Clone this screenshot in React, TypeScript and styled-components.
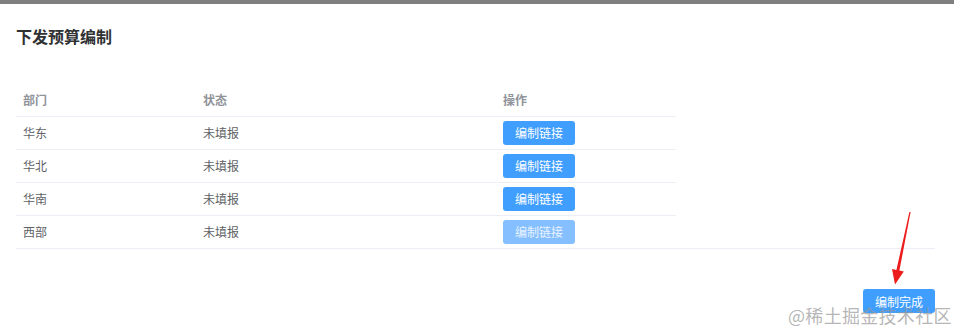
import React from "react";
import styled, { createGlobalStyle } from "styled-components";

const Global = createGlobalStyle`
  html, body { margin: 0; padding: 0; background: #fff; }
  body { font-family: "Noto Sans CJK SC", "Liberation Sans", sans-serif; }
`;

const Page = styled.div`
  position: relative;
  width: 954px;
  height: 330px;
  overflow: hidden;
  background: #fff;
`;

const TopBar = styled.div`
  height: 4px;
  background: #7f7f7f;
`;

const Content = styled.div`
  padding: 22px 19px 0 16px;
`;

const Title = styled.h2`
  margin: 0;
  font-size: 16px;
  line-height: 20px;
  font-weight: 700;
  color: #303133;
`;

const TableWrap = styled.div`
  margin-top: 37px;
  border-bottom: 1px solid #ebeef5;
`;

const Table = styled.table`
  border-collapse: collapse;
  table-layout: fixed;
  width: 660px;
  font-size: 12px;
`;

const Th = styled.th<{ $w: number }>`
  width: ${(p) => p.$w}px;
  height: 33px;
  padding: 0 0 0 7px;
  text-align: left;
  font-weight: 700;
  color: #909399;
  border-bottom: 1px solid #ebeef5;
  box-sizing: border-box;
`;

const Td = styled.td<{ $last?: boolean }>`
  height: 33px;
  padding: 0 0 0 7px;
  color: #606266;
  border-bottom: ${(p) => (p.$last ? "none" : "1px solid #ebeef5")};
  box-sizing: border-box;
  vertical-align: middle;
`;

const Btn = styled.button<{ $disabled?: boolean }>`
  display: inline-flex;
  align-items: center;
  justify-content: center;
  width: 72px;
  height: 24px;
  padding: 0;
  border: none;
  border-radius: 3px;
  background: ${(p) => (p.$disabled ? "#85bfff" : "#409eff")};
  color: ${(p) => (p.$disabled ? "#e8f3ff" : "#fff")};
  font-family: inherit;
  font-size: 12px;
  cursor: ${(p) => (p.$disabled ? "not-allowed" : "pointer")};
`;

const Footer = styled.div`
  display: flex;
  justify-content: flex-end;
  margin-top: 40px;
`;

const Watermark = styled.div`
  position: absolute;
  left: 788px;
  top: 303px;
  font-size: 18px;
  line-height: 24px;
  color: rgba(150, 150, 150, 0.7);
  white-space: nowrap;
  letter-spacing: 0.3px;
  pointer-events: none;
`;

const Overlay = styled.svg`
  position: absolute;
  left: 0;
  top: 0;
  pointer-events: none;
`;

const rows = [
  { dept: "华东", status: "未填报", disabled: false },
  { dept: "华北", status: "未填报", disabled: false },
  { dept: "华南", status: "未填报", disabled: false },
  { dept: "西部", status: "未填报", disabled: true },
];

export default function App() {
  return (
    <Page>
      <Global />
      <TopBar />
      <Content>
        <Title>下发预算编制</Title>
        <TableWrap>
          <Table>
            <thead>
              <tr>
                <Th $w={180}>部门</Th>
                <Th $w={300}>状态</Th>
                <Th $w={180}>操作</Th>
              </tr>
            </thead>
            <tbody>
              {rows.map((r, i) => {
                const last = i === rows.length - 1;
                return (
                  <tr key={r.dept}>
                    <Td $last={last}>{r.dept}</Td>
                    <Td $last={last}>{r.status}</Td>
                    <Td $last={last}>
                      <Btn $disabled={r.disabled}>编制链接</Btn>
                    </Td>
                  </tr>
                );
              })}
            </tbody>
          </Table>
        </TableWrap>
        <Footer>
          <Btn>编制完成</Btn>
        </Footer>
      </Content>
      <Overlay width="954" height="330" viewBox="0 0 954 330">
        <polygon
          points="910.6,212 909.4,212 896.4,270 892,269.1 895,284.5 903.8,271.5 899.4,270.6"
          fill="#ec1c1c"
        />
      </Overlay>
      <Watermark>@稀土掘金技术社区</Watermark>
    </Page>
  );
}
